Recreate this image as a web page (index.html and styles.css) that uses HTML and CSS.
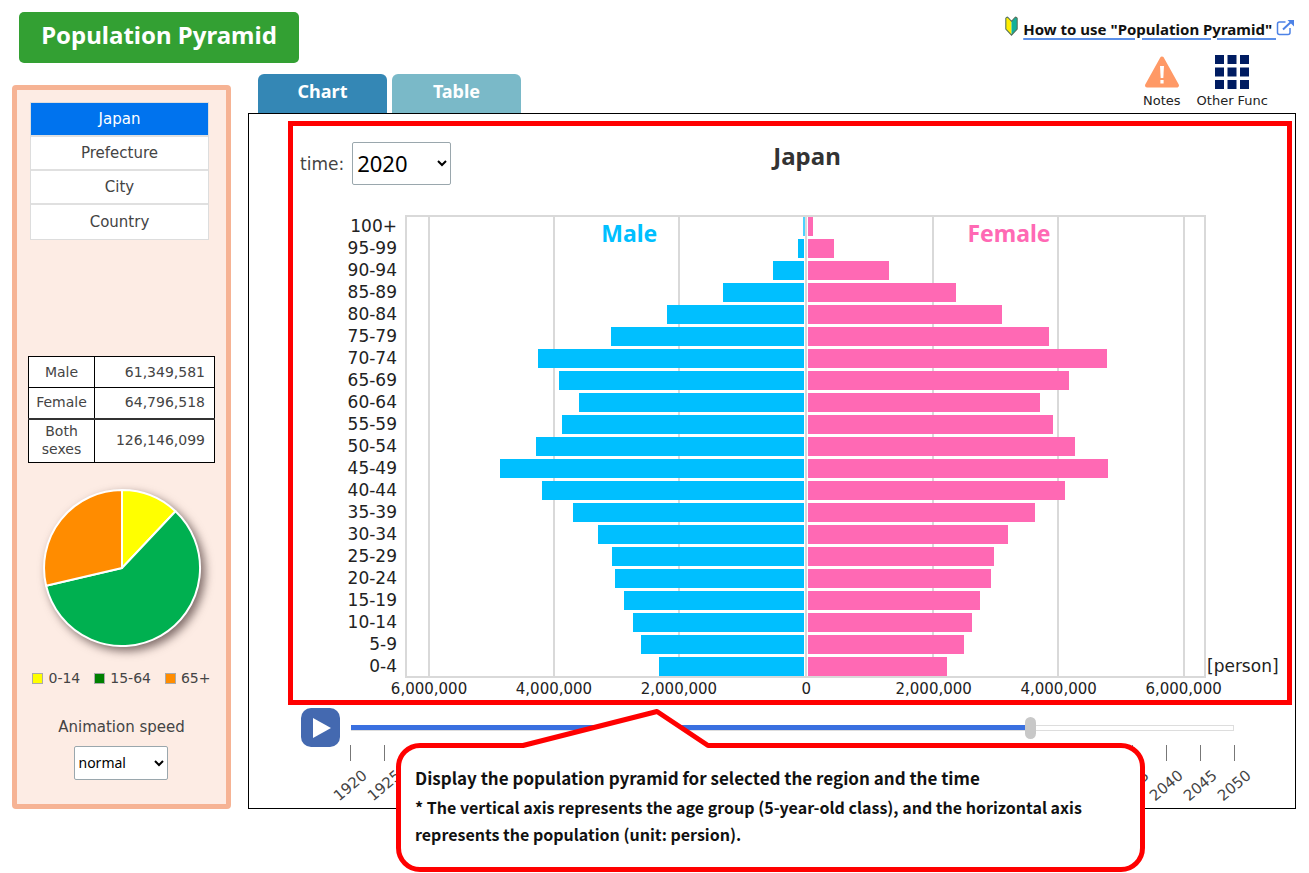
FILE: index.html
```html
<!DOCTYPE html>
<html lang="en">
<head>
<meta charset="utf-8">
<title>Population Pyramid</title>
<meta name="viewport" content="width=device-width, initial-scale=1">
<link rel="stylesheet" href="styles.css">
</head>
<body>
<div class="page">
  <div class="left">
    <h1 class="title">Population Pyramid</h1>
    <aside class="sidebar">
      <div class="regions">
        <button type="button" class="region region-on">Japan</button>
        <button type="button" class="region">Prefecture</button>
        <button type="button" class="region">City</button>
        <button type="button" class="region">Country</button>
      </div>
      <table class="totals">
        <tr><th scope="row">Male</th><td>61,349,581</td></tr>
        <tr><th scope="row">Female</th><td>64,796,518</td></tr>
        <tr class="both"><th scope="row">Both sexes</th><td>126,146,099</td></tr>
      </table>
      <svg class="pie" viewBox="-78 -78 156 156" role="img" aria-label="Age groups">
        <g stroke="#fff" stroke-width="2" stroke-linejoin="round">
          <path fill="#ff0" d="M0 0V-78A78 78 0 0 1 53.5 -56.8Z"/>
          <path fill="#00b050" d="M0 0L53.5 -56.8A78 78 0 1 1 -75.9 17.8Z"/>
          <path fill="#ff8c00" d="M0 0L-75.9 17.8A78 78 0 0 1 0 -78Z"/>
        </g>
      </svg>
      <ul class="legend">
        <li><span class="chip young"></span>0-14</li>
        <li><span class="chip middle"></span>15-64</li>
        <li><span class="chip old"></span>65+</li>
      </ul>
      <label class="speed-label" for="speed">Animation speed</label>
      <select class="speed" id="speed"><option>normal</option><option>fast</option><option>slow</option></select>
    </aside>
  </div>

  <div class="right">
    <div class="help">
      <svg class="leaf" viewBox="0 0 12 19" aria-hidden="true">
        <path d="M.6 2.2Q1.5.2 3 1.8L6 5V18.2L.6 12.5Z" fill="#ffee00"/>
        <path d="M11.400 2.200Q10.500.200 9 1.800L6 5V18.200L11.400 12.500Z" fill="#12b09a"/>
        <path d="M.6 2.2Q1.500.200 3 1.800L6 5L9 1.800Q10.500.200 11.400 2.200V12.500L6 18.200L.6 12.500Z" fill="none" stroke="#54705a"/>
      </svg>
      <a class="help-link" href="#help">How to use "Population Pyramid"&nbsp;</a>
      <svg class="ext" viewBox="0 0 18 17" fill="none" stroke="#4d82e6" stroke-width="1.500" aria-hidden="true">
        <path d="M9 3H3Q1 3 1 5V13.500Q1 15.500 3 15.500H11.500Q13.500 15.500 13.500 13.500V9"/>
        <path d="M6.500 10.500L15 2.500" stroke-width="2"/>
        <path d="M11 1H17.500V7.500Z" fill="#4d82e6" stroke="none"/>
      </svg>
    </div>
    <div class="bar">
      <nav class="tabs">
        <button type="button" class="tab tab-on">Chart</button>
        <button type="button" class="tab">Table</button>
      </nav>
      <div class="tools">
        <button type="button" class="tool">
          <svg width="36" height="34" viewBox="0 0 36 34" aria-hidden="true">
            <path d="M18 3.500L33 30.500H3Z" fill="#ff9966" stroke="#ff9966" stroke-width="4" stroke-linejoin="round"/>
            <path d="M16 11H20L19.300 23H16.700Z" fill="#fff"/><rect x="16.400" y="25" width="3.200" height="3.500" fill="#fff"/>
          </svg>
          <span>Notes</span>
        </button>
        <button type="button" class="tool">
          <svg width="34" height="34" viewBox="0 0 34 34" fill="#001c61" aria-hidden="true">
            <path d="M0 0H9V9H0ZM12.500 0H21.500V9H12.500ZM25 0H34V9H25ZM0 12.500H9V21.500H0ZM12.500 12.500H21.500V21.500H12.500ZM25 12.500H34V21.500H25ZM0 25H9V34H0ZM12.500 25H21.500V34H12.500ZM25 25H34V34H25Z"/>
          </svg>
          <span>Other Func</span>
        </button>
      </div>
    </div>

    <main class="panel">
      <section class="chart">
        <div class="chart-head">
          <div class="time">
            <label for="time">time:</label>
            <select id="time" class="year"><option>2020</option></select>
          </div>
          <h2 class="place">Japan</h2>
        </div>
        <div class="plot-row">
          <ul class="ages">
            <li>100+</li><li>95-99</li><li>90-94</li><li>85-89</li><li>80-84</li><li>75-79</li><li>70-74</li>
            <li>65-69</li><li>60-64</li><li>55-59</li><li>50-54</li><li>45-49</li><li>40-44</li><li>35-39</li>
            <li>30-34</li><li>25-29</li><li>20-24</li><li>15-19</li><li>10-14</li><li>5-9</li><li>0-4</li>
          </ul>
          <svg class="plot" role="img" aria-label="Population pyramid of Japan, 2020">
            <svg class="bars" width="100%" height="463" viewBox="405 215 801 463" preserveAspectRatio="none">
              <path class="lines" d="M406 216H1205V677H406ZM429 216V677M554 216V677M679 216V677M806 216V677M933 216V677M1058 216V677M1184 216V677"/>
              <g fill="#00bfff">
                <rect x="803" y="217" width="2" height="19" opacity=".7"/>
                <rect x="798" y="239" width="6" height="19"/>
                <rect x="773" y="261" width="31" height="19"/>
                <rect x="723" y="283" width="81" height="19"/>
                <rect x="667" y="305" width="137" height="19"/>
                <rect x="611" y="327" width="193" height="19"/>
                <rect x="538" y="349" width="266" height="19"/>
                <rect x="559" y="371" width="245" height="19"/>
                <rect x="579" y="393" width="225" height="19"/>
                <rect x="562" y="415" width="242" height="19"/>
                <rect x="536" y="437" width="268" height="19"/>
                <rect x="500" y="459" width="304" height="19"/>
                <rect x="542" y="481" width="262" height="19"/>
                <rect x="573" y="503" width="231" height="19"/>
                <rect x="598" y="525" width="206" height="19"/>
                <rect x="612" y="547" width="192" height="19"/>
                <rect x="615" y="569" width="189" height="19"/>
                <rect x="624" y="591" width="180" height="19"/>
                <rect x="633" y="613" width="171" height="19"/>
                <rect x="641" y="635" width="163" height="19"/>
                <rect x="659" y="657" width="145" height="19"/>
              </g>
              <g fill="#ff69b4">
                <rect x="808" y="217" width="5" height="19"/>
                <rect x="808" y="239" width="26" height="19"/>
                <rect x="808" y="261" width="81" height="19"/>
                <rect x="808" y="283" width="148" height="19"/>
                <rect x="808" y="305" width="194" height="19"/>
                <rect x="808" y="327" width="241" height="19"/>
                <rect x="808" y="349" width="299" height="19"/>
                <rect x="808" y="371" width="261" height="19"/>
                <rect x="808" y="393" width="232" height="19"/>
                <rect x="808" y="415" width="245" height="19"/>
                <rect x="808" y="437" width="267" height="19"/>
                <rect x="808" y="459" width="300" height="19"/>
                <rect x="808" y="481" width="257" height="19"/>
                <rect x="808" y="503" width="227" height="19"/>
                <rect x="808" y="525" width="200" height="19"/>
                <rect x="808" y="547" width="186" height="19"/>
                <rect x="808" y="569" width="183" height="19"/>
                <rect x="808" y="591" width="172" height="19"/>
                <rect x="808" y="613" width="164" height="19"/>
                <rect x="808" y="635" width="156" height="19"/>
                <rect x="808" y="657" width="139" height="19"/>
              </g>
            </svg>
            <text class="sex" x="28%" y="27" fill="#00bfff">Male</text>
            <text class="sex" x="75.4%" y="27" fill="#ff69b4">Female</text>
            <g class="axis">
              <text x="3%" y="479">6,000,000</text>
              <text x="18.6%" y="479">4,000,000</text>
              <text x="34.2%" y="479">2,000,000</text>
              <text x="50.1%" y="479">0</text>
              <text x="66%" y="479">2,000,000</text>
              <text x="81.6%" y="479">4,000,000</text>
              <text x="97.2%" y="479">6,000,000</text>
            </g>
          </svg>
          <span class="unit">[person]</span>
        </div>
      </section>

      <div class="player">
        <button type="button" class="play" aria-label="Play">
          <svg width="18" height="20" viewBox="0 0 18 20" aria-hidden="true"><path d="M0 0L18 10L0 20Z" fill="#fff"/></svg>
        </button>
        <div class="timeline">
          <input class="slider" type="range" min="1920" max="2050" step="5" value="2020" aria-label="Year">
          <ol class="ticks">
            <li><span>1920</span></li><li><span>1925</span></li><li><span>1930</span></li><li><span>1935</span></li><li><span>1940</span></li><li><span>1945</span></li><li><span>1950</span></li><li><span>1955</span></li><li><span>1960</span></li><li><span>1965</span></li><li><span>1970</span></li><li><span>1975</span></li><li><span>1980</span></li><li><span>1985</span></li><li><span>1990</span></li><li><span>1995</span></li><li><span>2000</span></li><li><span>2005</span></li><li><span>2010</span></li><li><span>2015</span></li><li><span>2020</span></li><li><span>2025</span></li><li><span>2030</span></li><li><span>2035</span></li><li><span>2040</span></li><li><span>2045</span></li><li><span>2050</span></li>
          </ol>
        </div>
      </div>

      <div class="callout">
        <svg class="tail" width="190" height="40" viewBox="0 0 190 40" aria-hidden="true">
          <path d="M2 37L136 3L187 37V40H2Z" fill="#fff"/>
          <path d="M0 37.500H2L136 3.500L187 37.500H190" fill="none" stroke="#f00" stroke-width="5" stroke-linejoin="round"/>
        </svg>
        <p class="callout-head">Display the population pyramid for selected the region and the time</p>
        <p class="callout-text">* The vertical axis represents the age group (5-year-old class), and the horizontal axis represents the population (unit: persion).</p>
      </div>
    </main>
  </div>
</div>
</body>
</html>
```
FILE: styles.css
```css
* { box-sizing: border-box; }
body {
  margin: 0;
  background: #fff;
  color: #444;
  font-family: "DejaVu Sans", Verdana, sans-serif;
  font-size: 15px;
}
ul, ol { margin: 0; padding: 0; list-style: none; }
button { font: inherit; color: inherit; border: 0; padding: 0; cursor: pointer; }
p, h1, h2 { margin: 0; }

.page {
  display: grid;
  grid-template-columns: 219px minmax(0, 1fr);
  column-gap: 17px;
  padding: 12px 13px 64px 12px;
}
.left { display: flex; flex-direction: column; gap: 22px; }
.title {
  width: 280px;
  height: 51px;
  margin-left: 7px;
  border-radius: 5px;
  background: #33a033;
  color: #fff;
  font: bold 24px/45px "Noto Sans", sans-serif;
  text-align: center;
  position: relative;
}
.sidebar {
  flex: 1;
  display: flex;
  flex-direction: column;
  align-items: center;
  padding: 12px 11px 23px;
  border: 5px solid #f6b394;
  border-radius: 4px;
  background: #fdece4;
}
.regions { width: 179px; border: 1px solid #ddd; margin-right: 4px; }
.region {
  display: block;
  width: 100%;
  height: 34px;
  padding-bottom: 1px;
  background: #fff;
  border-bottom: 2px solid #e0e0e0;
}
.region:last-child { border-bottom: 0; }
.region-on { background: #0073ee; color: #fff; }

.totals {
  width: 187px;
  margin-top: 116px;
  border-collapse: collapse;
  background: #fff;
  font-size: 14px;
  line-height: 18px;
}
.totals th, .totals td { border: 1px solid #000; height: 31px; font-weight: normal; padding: 0 0 1px; }
.totals th { width: 66px; padding: 0 4px 1px; }
.totals td { text-align: right; padding-right: 9px; }
.totals .both th, .totals .both td { height: 44px; border-top: 2px solid #333; }

.pie {
  width: 156px;
  height: 156px;
  margin-top: 27px;
  overflow: visible;
  filter: drop-shadow(4px 4px 5px rgba(60, 40, 40, 0.65));
}
.legend { display: flex; gap: 14px; margin-top: 23px; font-size: 14px; line-height: 18px; }
.legend li { display: flex; align-items: center; gap: 5px; }
.chip { width: 11px; height: 11px; border: 1px solid #aaa; }
.young { background: #ff0; }
.middle { background: #008000; }
.old { background: #ff8c00; }
.speed-label { margin-top: 31px; line-height: 18px; }
select {
  border: 1px solid #9aa7ad;
  border-radius: 2px;
  background: #fff;
  color: #000;
  font-family: "Noto Sans", sans-serif;
}
.speed { width: 94px; height: 34px; margin: 10px 2px 0 0; padding-bottom: 2px; font-size: 14px; }

.right { display: flex; flex-direction: column; }
.help { display: flex; justify-content: flex-end; align-items: center; height: 34px; }
.leaf { width: 13px; height: 20px; margin: 0 5px 6px 0; }
.help-link {
  color: #111;
  font: bold 15px/18px "Noto Sans", sans-serif;
  text-decoration: underline #5b8fe8;
  text-decoration-thickness: 2px;
  text-underline-offset: 3px;
}
.ext { width: 19px; height: 17px; margin: 0 1px 4px 0; }
.bar { display: flex; justify-content: space-between; align-items: flex-end; height: 67px; }
.tabs { display: flex; gap: 5px; margin-left: 10px; }
.tab {
  width: 129px;
  height: 39px;
  padding-bottom: 6px;
  border-radius: 6px 6px 0 0;
  background: #7ab9c8;
  color: #fff;
  font: bold 18px/24px "Noto Sans", sans-serif;
}
.tab-on { background: #3487b5; }
.tools { display: flex; gap: 16px; align-self: flex-start; padding: 9px 28px 0 0; }
.tool { display: flex; flex-direction: column; align-items: center; background: none; font-size: 13px; line-height: 24px; color: #222; }

.panel {
  position: relative;
  border: 1px solid #000;
  padding: 7px 3px 0 39px;
  height: 696px;
}
.chart { border: 5px solid #f00; height: 584px; padding: 16px 7px 0; }
.chart-head { display: grid; grid-template-columns: 1fr auto 1fr; align-items: start; }
.time { display: flex; align-items: center; gap: 8px; font-size: 17px; }
.year { width: 99px; height: 43px; padding-bottom: 2px; font-size: 22px; }
.place { margin-left: 34px; color: #333; font: bold 24px/28px "Noto Sans", sans-serif; }
.plot-row {
  display: grid;
  grid-template-columns: 97px minmax(0, 1fr) 73px;
  column-gap: 1px;
  margin-top: 30px;
  padding-left: 7px;
}
.ages { padding-right: 7px; text-align: right; color: #222; font-size: 17px; line-height: 22px; }
.plot { width: 100%; height: 485px; overflow: visible; }
.lines { fill: none; stroke: #d9d9d9; stroke-width: 2px; vector-effect: non-scaling-stroke; }
.sex { font: bold 23px "Noto Sans", sans-serif; text-anchor: middle; }
.axis { font-size: 15px; fill: #222; text-anchor: middle; }
.unit { margin-top: 440px; color: #222; font-size: 17px; line-height: 22px; }

.player { display: flex; gap: 5px; padding: 3px 52px 0 13px; }
.play {
  display: flex;
  align-items: center;
  justify-content: center;
  flex: none;
  width: 39px;
  height: 39px;
  padding-left: 2px;
  border-radius: 10px;
  background: #4469b0;
}
.timeline { flex: 1; min-width: 0; padding-top: 8px; }
.slider {
  -webkit-appearance: none;
  appearance: none;
  display: block;
  width: 100%;
  height: 23px;
  margin: 0;
  background: none;
}
.slider::-webkit-slider-runnable-track {
  height: 6px;
  background:
    linear-gradient(#3a70e0, #3a70e0) 6px 0 / 76% 5px no-repeat,
    linear-gradient(#fff, #fff) 7px 1px / calc(100% - 14px) 4px no-repeat,
    linear-gradient(#ddd, #ddd) 6px 0 / calc(100% - 12px) 6px no-repeat;
}
.slider::-webkit-slider-thumb {
  -webkit-appearance: none;
  width: 11px;
  height: 22px;
  margin-top: -8px;
  border-radius: 6px;
  background: #c8c8c8;
}
.ticks { display: flex; justify-content: space-between; margin: 6px 5px 0; font-size: 15px; line-height: 18px; }
.ticks li { width: 1px; }
.ticks li::before { content: ""; display: block; width: 1px; height: 16px; background: #777; }
.ticks span { display: block; width: 40px; margin: 15px 0 0 -19px; transform: rotate(-40deg); }

.callout {
  position: absolute;
  left: 147px;
  top: 629px;
  width: 749px;
  height: 129px;
  padding: 16px 30px 0 14px;
  border: 5px solid #f00;
  border-radius: 24px;
  background: #fff;
  color: #111;
  font-family: "Noto Sans CJK JP", sans-serif;
  font-weight: bold;
}
.tail { position: absolute; left: 120px; top: -40px; }
.callout-head { font-size: 17px; line-height: 28px; }
.callout-text { font-size: 16px; line-height: 27px; margin-top: 2px; }
```
